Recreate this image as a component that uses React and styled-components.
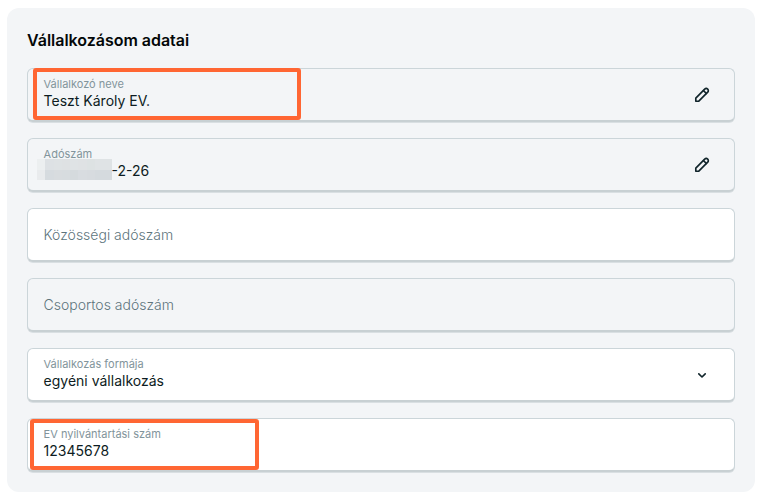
import React from "react";
import styled, { createGlobalStyle } from "styled-components";

const GlobalStyle = createGlobalStyle`
  * { box-sizing: border-box; }
  body { margin: 0; background: #fff; font-family: Inter, sans-serif; }
`;

const Panel = styled.section`
  width: 748px;
  height: 484px;
  margin: 8px 0 0 7px;
  padding: 20px;
  border-radius: 12px;
  background: #f3f5f7;
`;

const Title = styled.h2`
  margin: 0 0 16px;
  font-size: 16px;
  line-height: 24px;
  font-weight: 600;
  letter-spacing: -0.02px;
  color: #030708;
`;

const Fields = styled.div`
  display: flex;
  flex-direction: column;
  gap: 16px;
`;

const Field = styled.div`
  position: relative;
  display: flex;
  align-items: center;
  justify-content: space-between;
  height: 54px;
  padding: 0 24px 0 15.6px;
  border: 1px solid #cbd5d9;
  border-bottom: 2px solid #c8d0d3;
  border-radius: 6px;
  box-shadow: 0 1px 0 #d9dfe2;
  background: ${(p) => (p.$editable ? "#fff" : "#f3f5f7")};
`;

const Content = styled.div`
  display: flex;
  flex-direction: column;
  padding-bottom: 2px;
`;

const Label = styled.span`
  font-size: 11px;
  line-height: 14px;
  color: #82949b;
`;

const Value = styled.span`
  display: flex;
  font-size: 14px;
  line-height: 20px;
  color: #0d1c22;
`;

const Placeholder = styled.span`
  font-size: 14px;
  line-height: 20px;
  font-weight: 300;
  color: #5d747c;
`;

const Highlight = styled.div`
  position: absolute;
  left: ${(p) => p.$left}px;
  top: ${(p) => p.$top}px;
  width: ${(p) => p.$width}px;
  height: ${(p) => p.$height}px;
  border: 4px solid #ff6633;
  border-radius: 3px;
`;

const Mosaic = styled.span`
  position: absolute;
  left: 9px;
  top: 20px;
  width: 75px;
  height: 21px;
  display: grid;
  grid-template-columns: 8px 9px repeat(3, 8px) 9px 8px 8px 9px;
  grid-template-rows: 11px 10px;
`;

const Cell = styled.i`
  background: ${(p) => p.$color};
`;

const MaskedSpace = styled.span`
  width: 68px;
`;

const Icon = styled.svg`
  flex: none;
  width: 16px;
  height: 16px;
  fill: none;
  stroke: #11252b;
  stroke-width: 1.65;
  stroke-linejoin: round;
  stroke-linecap: round;
`;

const PencilIcon = () => (
  <Icon viewBox="0 0 16 16">
    <path d="M1.8 14.2v-3.1l8.9-8.9a2.1 2.1 0 0 1 3 3l-8.9 9Z" />
    <path d="m9.5 3.6 2.9 2.9" />
  </Icon>
);

const ChevronIcon = () => (
  <Icon viewBox="0 0 16 16">
    <path d="m4.8 6.9 3.2 3.1 3.2-3.1" />
  </Icon>
);

const cells = [
  "#eceff0", "#dde1e4", "#dee2e4", "#dee1e3", "#dfe3e5", "#dfe2e4", "#dde2e3", "#dfe3e5", "#dfe3e5",
  "#e9ebed", "#d6dbdf", "#d8dcdf", "#d7dcdf", "#d5dadd", "#d8dce0", "#d7dbdf", "#d5dade", "#d5dade",
];

export default function App() {
  return (
    <>
      <GlobalStyle />
      <Panel>
        <Title>Vállalkozásom adatai</Title>
        <Fields>
          <Field>
            <Content>
              <Label>Vállalkozó neve</Label>
              <Value>Teszt Károly EV.</Value>
            </Content>
            <PencilIcon />
            <Highlight $left={5} $top={-1} $width={268} $height={52} />
          </Field>
          <Field>
            <Content>
              <Label>Adószám</Label>
              <Value><MaskedSpace />-2-26</Value>
            </Content>
            <Mosaic>
              {cells.map((color, i) => <Cell key={i} $color={color} />)}
            </Mosaic>
            <PencilIcon />
          </Field>
          <Field $editable>
            <Placeholder>Közösségi adószám</Placeholder>
          </Field>
          <Field>
            <Placeholder>Csoportos adószám</Placeholder>
          </Field>
          <Field $editable>
            <Content>
              <Label>Vállalkozás formája</Label>
              <Value>egyéni vállalkozás</Value>
            </Content>
            <ChevronIcon />
          </Field>
          <Field $editable>
            <Content>
              <Label>EV nyilvántartási szám</Label>
              <Value>12345678</Value>
            </Content>
            <Highlight $left={2} $top={0} $width={229} $height={51} />
          </Field>
        </Fields>
      </Panel>
    </>
  );
}
